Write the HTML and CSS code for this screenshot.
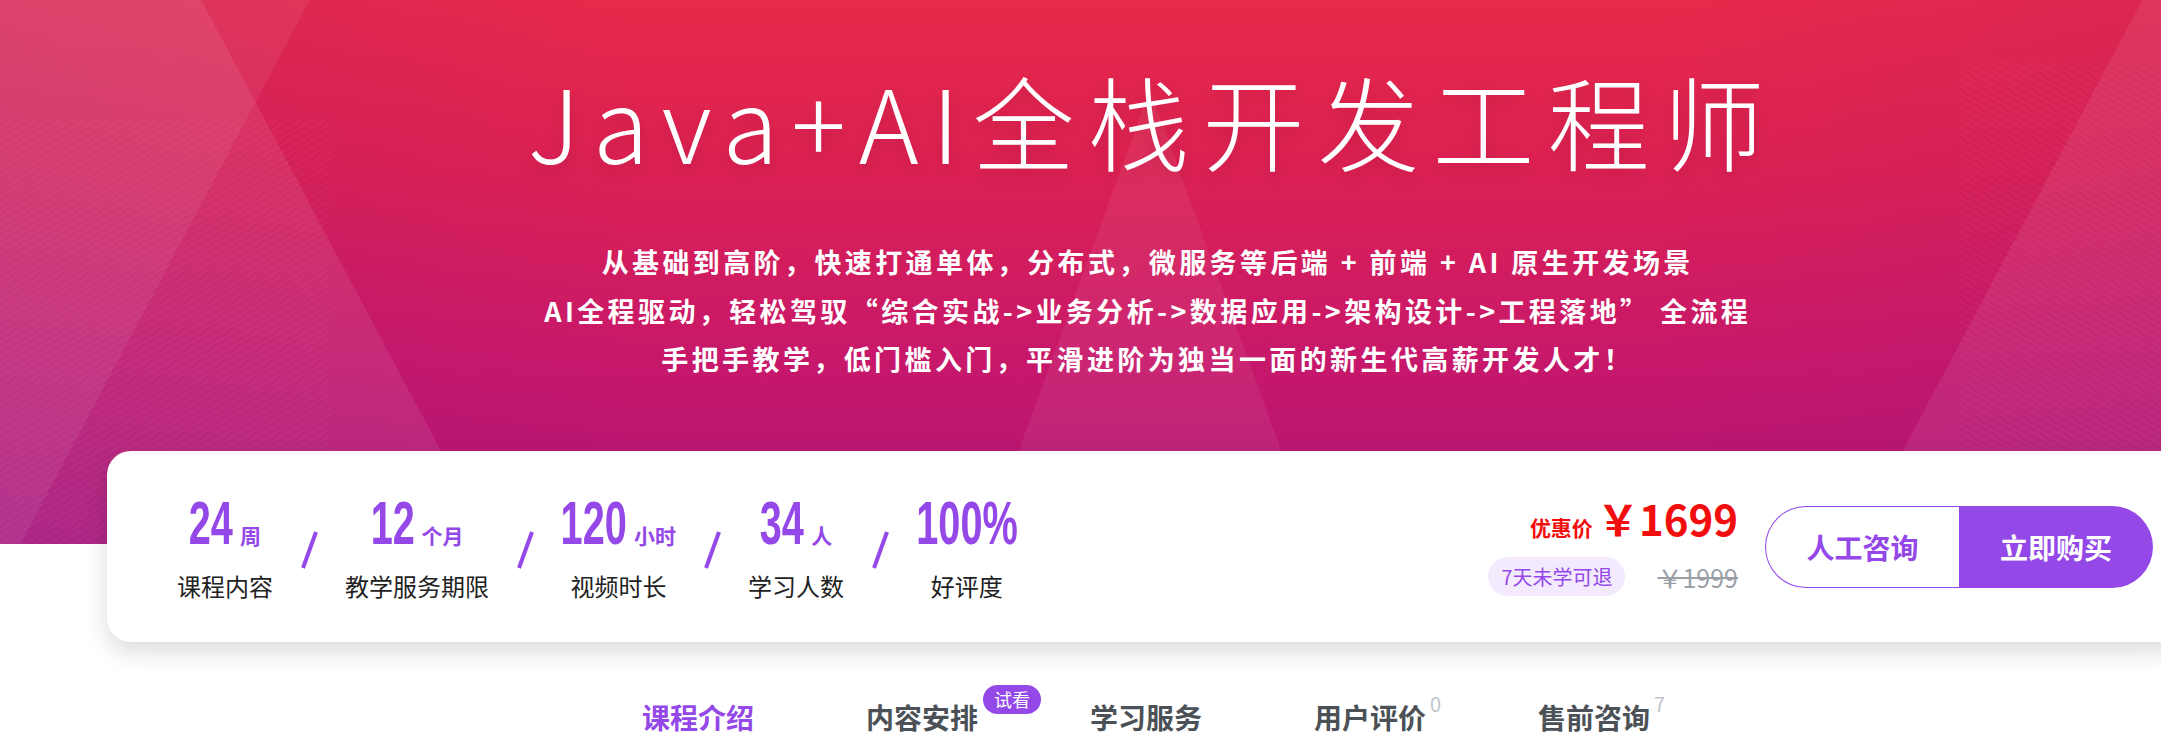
FILE: index.html
```html
<!DOCTYPE html>
<html lang="zh-CN">
<head>
<meta charset="utf-8">
<title>Java+AI全栈开发工程师</title>
<link rel="stylesheet" href="styles.css">
</head>
<body>
<div class="page">
  <header class="banner">
    <h1 class="title">Java+AI全栈开发工程师</h1>
    <div class="sub">
      <p>从基础到高阶，快速打通单体，分布式，微服务等后端 + 前端 + AI 原生开发场景</p>
      <p>AI全程驱动，轻松驾驭“综合实战-&gt;业务分析-&gt;数据应用-&gt;架构设计-&gt;工程落地” 全流程</p>
      <p>手把手教学，低门槛入门，平滑进阶为独当一面的新生代高薪开发人才！</p>
    </div>
  </header>

  <section class="card">
    <div class="stats">
      <div class="stat">
        <div class="num"><span class="n w2">24</span><span class="u">周</span></div>
        <div class="lbl">课程内容</div>
      </div>
      <svg class="slash" viewBox="0 0 18 38"><line x1="16" y1="1" x2="3" y2="37" stroke="#9448e8" stroke-width="4"/></svg>
      <div class="stat">
        <div class="num"><span class="n w2">12</span><span class="u">个月</span></div>
        <div class="lbl">教学服务期限</div>
      </div>
      <svg class="slash" viewBox="0 0 18 38"><line x1="16" y1="1" x2="3" y2="37" stroke="#9448e8" stroke-width="4"/></svg>
      <div class="stat">
        <div class="num"><span class="n w3">120</span><span class="u">小时</span></div>
        <div class="lbl">视频时长</div>
      </div>
      <svg class="slash" viewBox="0 0 18 38"><line x1="16" y1="1" x2="3" y2="37" stroke="#9448e8" stroke-width="4"/></svg>
      <div class="stat">
        <div class="num"><span class="n w2">34</span><span class="u">人</span></div>
        <div class="lbl">学习人数</div>
      </div>
      <svg class="slash" viewBox="0 0 18 38"><line x1="16" y1="1" x2="3" y2="37" stroke="#9448e8" stroke-width="4"/></svg>
      <div class="stat">
        <div class="num"><span class="n w4">100%</span></div>
        <div class="lbl">好评度</div>
      </div>
    </div>

    <div class="spacer"></div>

    <div class="price">
      <div class="row1"><span class="tag">优惠价</span><span class="now">￥1699</span></div>
      <div class="row2"><span class="refund">7天未学可退</span><span class="old">￥1999</span></div>
    </div>

    <div class="btns">
      <a class="btn consult">人工咨询</a>
      <a class="btn buy">立即购买</a>
    </div>
  </section>

  <nav class="tabs">
    <div class="tab active">课程介绍</div>
    <div class="tab">内容安排<span class="badge">试看</span></div>
    <div class="tab">学习服务</div>
    <div class="tab">用户评价<span class="sup">0</span></div>
    <div class="tab">售前咨询<span class="sup">7</span></div>
  </nav>
</div>
</body>
</html>
```

FILE: styles.css
```css
html, body {
  margin: 0;
  padding: 0;
  overflow: hidden;
  background: #fff;
}

.page {
  width: 2292px;
  font-family: "Noto Sans CJK SC", "Noto Sans", sans-serif;
}

/* ---------- banner ---------- */
.banner {
  height: 544px;
  box-sizing: border-box;
  padding-top: 69px;
  text-align: center;
  color: #fff;
  background:
    repeating-linear-gradient(150deg, rgba(255,255,255,0.05) 0 1px, transparent 1px 6px) 0 120px / 330px 424px no-repeat,
    repeating-linear-gradient(30deg, rgba(255,255,255,0.05) 0 1px, transparent 1px 6px) 1960px 60px / 332px 484px no-repeat,
    conic-gradient(from 160deg at 1150px 90px, rgba(255,255,255,0.06) 0deg 40deg, transparent 40deg 360deg),
    linear-gradient(62deg, rgba(255,255,255,0.08) 0 19%, transparent 19% 100%),
    linear-gradient(-62deg, rgba(255,255,255,0.07) 0 17%, transparent 17% 100%),
    linear-gradient(118deg, rgba(255,255,255,0.06) 0 12%, transparent 12% 100%),
    linear-gradient(90deg, rgba(110,20,150,0.14) 0%, transparent 28%, transparent 72%, rgba(110,20,150,0.12) 100%),
    linear-gradient(180deg, #e8294a 0%, #dc2152 30%, #c8186a 65%, #ad1477 100%);
}

.title {
  margin: 0;
  font-size: 102px;
  line-height: 1;
  font-weight: 300;
  letter-spacing: 13px;
  padding-left: 13px;
  text-shadow: 0 6px 14px rgba(90, 0, 30, 0.18);
}

.sub {
  margin-top: 67px;
}

.sub p {
  margin: 0;
  font-size: 27px;
  line-height: 48.5px;
  font-weight: 700;
  letter-spacing: 3.4px;
  padding-left: 3.4px;
}

/* ---------- card ---------- */
.card {
  margin: -93px 107px 0;
  height: 191px;
  box-sizing: border-box;
  background: #fff;
  border-radius: 24px;
  box-shadow: 0 10px 24px rgba(0, 0, 0, 0.14);
  display: flex;
  align-items: center;
  padding: 0 32px 0 70px;
}

.stats {
  display: flex;
  align-items: center;
  gap: 27px;
}

.stat {
  display: flex;
  flex-direction: column;
  align-items: center;
}

.num {
  display: flex;
  align-items: baseline;
  color: #9448e8;
  height: 60px;
}

.n {
  display: inline-block;
  font-family: "Liberation Sans", sans-serif;
  font-weight: 700;
  font-size: 61px;
  line-height: 60px;
  transform: scaleX(0.65);
  transform-origin: right center;
}

.n.w2 { margin-left: -0.39em; }
.n.w3 { margin-left: -0.585em; }
.n.w4 { margin-left: -0.45em; margin-right: -0.45em; transform-origin: center; }

.u {
  font-size: 21px;
  font-weight: 700;
  line-height: 1;
  margin-left: 7px;
}

.lbl {
  margin-top: 18px;
  font-size: 24px;
  line-height: 29px;
  color: #222;
  white-space: nowrap;
}

.slash {
  width: 18px;
  height: 38px;
  flex: none;
  margin-top: 6px;
}

.spacer {
  flex: 1;
}

/* ---------- price ---------- */
.price {
  display: flex;
  flex-direction: column;
  align-items: flex-end;
  margin-right: 27px;
}

.row1 {
  display: flex;
  align-items: baseline;
  color: #f20e0e;
  font-weight: 700;
}

.tag {
  font-size: 21px;
  margin-right: 4px;
}

.now {
  font-size: 42px;
  line-height: 42px;
}

.row2 {
  display: flex;
  align-items: center;
  margin-top: 15px;
}

.refund {
  background: #f3eafd;
  color: #9448e8;
  font-size: 20px;
  height: 39px;
  line-height: 39px;
  padding: 0 13px;
  border-radius: 20px;
}

.old {
  margin-left: 32px;
  color: #9aa0a6;
  font-size: 25px;
  line-height: 30px;
  text-decoration: line-through;
}

/* ---------- buttons ---------- */
.btns {
  display: flex;
}

.btn {
  width: 194px;
  height: 82px;
  box-sizing: border-box;
  display: flex;
  align-items: center;
  justify-content: center;
  font-size: 28px;
  font-weight: 700;
  cursor: pointer;
}

.consult {
  border: 1px solid #9448e8;
  border-right: none;
  border-radius: 41px 0 0 41px;
  color: #9448e8;
  background: #fff;
}

.buy {
  background: #9448e8;
  color: #fff;
  border-radius: 0 41px 41px 0;
}

/* ---------- tabs ---------- */
.tabs {
  display: flex;
  justify-content: center;
  gap: 112px;
  margin-top: 58px;
}

.tab {
  position: relative;
  font-size: 28px;
  font-weight: 700;
  line-height: 34px;
  color: #4b5157;
  white-space: nowrap;
}

.tab.active {
  color: #9448e8;
}

.badge {
  position: absolute;
  left: calc(100% + 5px);
  top: -15px;
  width: 58px;
  height: 29px;
  border-radius: 15px;
  background: #9448e8;
  color: #fff;
  font-size: 18px;
  font-weight: 400;
  line-height: 29px;
  text-align: center;
}

.sup {
  position: absolute;
  left: calc(100% + 4px);
  top: -6px;
  font-size: 20px;
  font-weight: 400;
  line-height: 20px;
  color: #c0c4c8;
}
```
